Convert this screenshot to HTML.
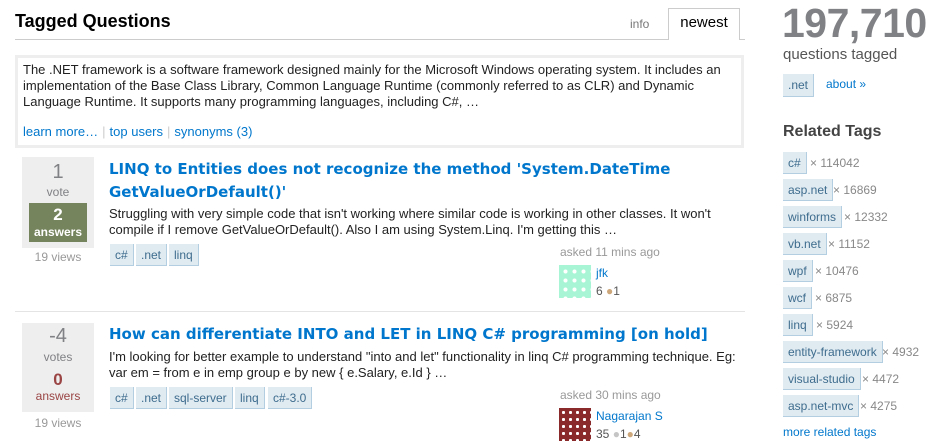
<!DOCTYPE html>
<html><head><meta charset="utf-8"><style>
body{margin:0;width:946px;height:448px;background:#fff;font-family:"Liberation Sans",Arial,sans-serif;position:relative;overflow:hidden;color:#222}
.a{position:absolute;white-space:nowrap}
.t{position:absolute;background:#e0eaf1;border-bottom:1px solid #b3cee1;border-right:1px solid #b3cee1;color:#3e6d8e;font-size:12px;height:22px;line-height:22px;padding:0 5px;box-sizing:border-box}
.m{color:#888;font-size:12px}
.stat{position:absolute;left:22px;width:72px;background:#eee}
.ql{color:#0077cc;font-family:"DejaVu Sans",sans-serif;font-weight:bold;font-size:15px}
.ex{font-size:13px;line-height:16px}
a{color:#0077cc;text-decoration:none}
.sep{color:#ccc;margin:0 4px}
</style></head><body>
<div class="a" style="left:15px;top:11px;font-size:18px;font-weight:bold;color:#000">Tagged Questions</div>
<div class="a" style="left:15px;top:39px;width:730px;height:1px;background:#ccc"></div>
<div class="a" style="left:630px;top:17px;font-size:12px;color:#777">info</div>
<div class="a" style="left:668px;top:8px;width:72px;height:32px;border:1px solid #ccc;border-bottom:none;background:#fff;box-sizing:border-box;text-align:center;font-size:15px;line-height:28px;color:#000">newest</div>
<div class="a" style="left:15px;top:55px;width:729px;height:93px;border:3px solid #eee;box-sizing:border-box"></div>
<div class="a" style="left:23px;top:62px;font-size:13px;line-height:16px;color:#222">The .NET framework is a software framework designed mainly for the Microsoft Windows operating system. It includes an<br>implementation of the Base Class Library, Common Language Runtime (commonly referred to as CLR) and Dynamic<br>Language Runtime. It supports many programming languages, including C#, …</div>
<div class="a" style="left:23px;top:124px;font-size:13px"><a>learn more…</a><span class="sep">|</span><a>top users</a><span class="sep">|</span><a>synonyms (3)</a></div>

<div class="stat" style="top:157px;height:91px"></div>
<div class="a" style="left:22px;width:72px;text-align:center;top:161px;font-size:20px;color:#808185">1</div>
<div class="a" style="left:22px;width:72px;text-align:center;top:185px;font-size:12px;color:#808185">vote</div>
<div class="a" style="left:29px;top:203px;width:58px;height:39px;background:#75845c;color:#fff;text-align:center"><div style="font-size:17px;font-weight:bold;line-height:20px;margin-top:2px">2</div><div style="font-size:12px;font-weight:bold;line-height:14px">answers</div></div>
<div class="a" style="left:22px;width:72px;text-align:center;top:250px;font-size:12px;color:#999">19 views</div>
<div class="a ql" style="left:109px;top:158px;line-height:23px">LINQ to Entities does not recognize the method 'System.DateTime<br>GetValueOrDefault()'</div>
<div class="a ex" style="left:109px;top:206px">Struggling with very simple code that isn't working where similar code is working in other classes. It won't<br>compile if I remove GetValueOrDefault(). Also I am using System.Linq. I'm getting this …</div>
<div class="t" style="left:110px;top:244px">c#</div><div class="t" style="left:136px;top:244px">.net</div><div class="t" style="left:169px;top:244px">linq</div>
<div class="a m" style="left:560px;top:245px;font-size:12px;color:#999">asked 11 mins ago</div>
<div class="a" style="left:559px;top:265px;width:32px;height:33px;background:
radial-gradient(circle,#fff 30%,transparent 32%) 2px 2px/9px 9px,#a8f5d6"></div>
<div class="a" style="left:596px;top:266px;font-size:12px"><a>jfk</a></div>
<div class="a" style="left:596px;top:284px;font-size:12px;color:#555">6 <span style="color:#cda679">●</span>1</div>
<div class="a" style="left:15px;top:311px;width:730px;height:1px;background:#e4e4e4"></div>

<div class="stat" style="top:323px;height:89px"></div>
<div class="a" style="left:22px;width:72px;text-align:center;top:325px;font-size:20px;color:#808185">-4</div>
<div class="a" style="left:22px;width:72px;text-align:center;top:350px;font-size:12px;color:#808185">votes</div>
<div class="a" style="left:22px;width:72px;text-align:center;top:370px;font-size:17px;font-weight:bold;color:#9a4444">0</div>
<div class="a" style="left:22px;width:72px;text-align:center;top:389px;font-size:12px;color:#9a4444">answers</div>
<div class="a" style="left:22px;width:72px;text-align:center;top:416px;font-size:12px;color:#999">19 views</div>
<div class="a ql" style="left:109px;top:323px;line-height:23px">How can differentiate INTO and LET in LINQ C# programming [on hold]</div>
<div class="a ex" style="left:109px;top:349px">I'm looking for better example to understand "into and let" functionality in linq C# programming technique. Eg:<br>var em = from e in emp group e by new { e.Salary, e.Id } …</div>
<div class="t" style="left:110px;top:387px">c#</div><div class="t" style="left:136px;top:387px">.net</div><div class="t" style="left:169px;top:387px">sql-server</div><div class="t" style="left:235px;top:387px">linq</div><div class="t" style="left:268px;top:387px">c#-3.0</div>
<div class="a m" style="left:560px;top:388px;color:#999">asked 30 mins ago</div>
<div class="a" style="left:559px;top:408px;width:32px;height:33px;background:
radial-gradient(circle,#fff 30%,transparent 32%) 1px 1px/7px 7px,#8b2a2a"></div>
<div class="a" style="left:596px;top:409px;font-size:12px"><a>Nagarajan S</a></div>
<div class="a" style="left:596px;top:427px;font-size:12px;color:#555">35 <span style="color:#c5c5c5">●</span>1<span style="color:#cda679">●</span>4</div>

<div class="a" style="left:782px;top:0px;font-size:41px;font-weight:bold;color:#808185;letter-spacing:-0.5px">197,710</div>
<div class="a" style="left:783px;top:46px;font-size:15px;color:#555">questions tagged</div>
<div class="t" style="left:783px;top:74px;height:23px;line-height:23px">.net</div>
<div class="a" style="left:826px;top:77px;font-size:12px"><a>about »</a></div>
<div class="a" style="left:783px;top:123px;font-size:16px;font-weight:bold;color:#444">Related Tags</div>
<div class="t" style="left:783px;top:152px">c#</div><div class="a m" style="left:810px;top:156px">× 114042</div>
<div class="t" style="left:783px;top:179px">asp.net</div><div class="a m" style="left:833px;top:183px">× 16869</div>
<div class="t" style="left:783px;top:206px">winforms</div><div class="a m" style="left:844px;top:210px">× 12332</div>
<div class="t" style="left:783px;top:233px">vb.net</div><div class="a m" style="left:828px;top:237px">× 11152</div>
<div class="t" style="left:783px;top:260px">wpf</div><div class="a m" style="left:815px;top:264px">× 10476</div>
<div class="t" style="left:783px;top:287px">wcf</div><div class="a m" style="left:815px;top:291px">× 6875</div>
<div class="t" style="left:783px;top:314px">linq</div><div class="a m" style="left:816px;top:318px">× 5924</div>
<div class="t" style="left:783px;top:341px">entity-framework</div><div class="a m" style="left:882px;top:345px">× 4932</div>
<div class="t" style="left:783px;top:368px">visual-studio</div><div class="a m" style="left:862px;top:372px">× 4472</div>
<div class="t" style="left:783px;top:395px">asp.net-mvc</div><div class="a m" style="left:860px;top:399px">× 4275</div>
<div class="a" style="left:783px;top:425px;font-size:12px"><a>more related tags</a></div>
</body></html>
